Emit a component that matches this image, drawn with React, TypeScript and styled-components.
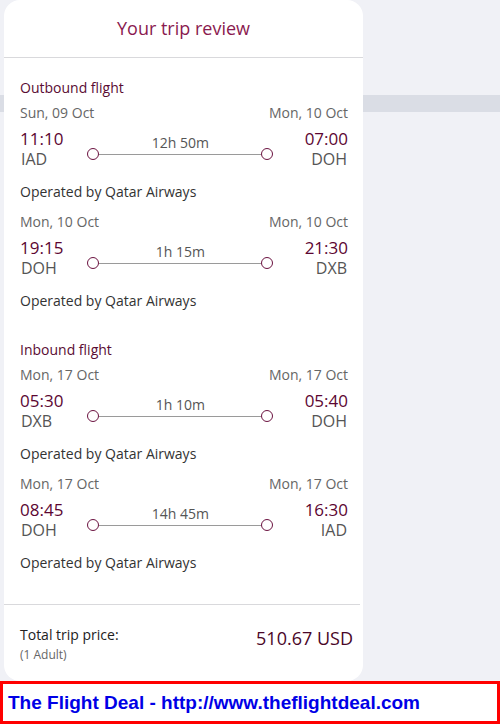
import styled, { createGlobalStyle } from "styled-components";

const GlobalStyle = createGlobalStyle`
  html, body {
    margin: 0;
    padding: 0;
    background: #f0f1f6;
    font-family: "Open Sans", "Noto Sans", sans-serif;
  }
`;

const Page = styled.div`
  position: relative;
  width: 500px;
  height: 724px;
  overflow: hidden;
  background: #f0f1f6;
  display: flex;
  flex-direction: column;
`;

const Band = styled.div`
  position: absolute;
  left: 0;
  right: 0;
  top: 95px;
  height: 17px;
  background: #dadde5;
`;

const Card = styled.div`
  position: relative;
  margin-left: 4px;
  width: 359px;
  height: 681px;
  background: #fff;
  border-radius: 16px;
  display: flex;
  flex-direction: column;
`;

const Title = styled.div`
  height: 57px;
  border-bottom: 1px solid #d9d9dc;
  text-align: center;
  font-size: 18px;
  line-height: 56px;
  color: #8a1a4f;
`;

const Body = styled.div`
  padding: 20px 15px 0 16px;
  flex: 1;
`;

const Section = styled.div<{ $gap?: number }>`
  margin-top: ${({ $gap }) => $gap ?? 0}px;
`;

const SectionTitle = styled.div`
  font-size: 14px;
  line-height: 20px;
  color: #5a0c33;
  margin-bottom: 5px;
`;

const Segment = styled.div<{ $gap?: number }>`
  margin-top: ${({ $gap }) => $gap ?? 0}px;
`;

const DateRow = styled.div`
  display: flex;
  justify-content: space-between;
  font-size: 14px;
  line-height: 20px;
  color: #666;
  margin-bottom: 6px;
`;

const TimeRow = styled.div`
  display: flex;
  align-items: flex-start;
`;

const Point = styled.div<{ $end?: boolean }>`
  display: flex;
  flex-direction: column;
  align-items: ${({ $end }) => ($end ? "flex-end" : "flex-start")};
  margin-left: ${({ $end }) => ($end ? "auto" : "0")};
`;

const Time = styled.div`
  font-size: 17px;
  line-height: 20px;
  color: #5c0632;
`;

const Code = styled.div`
  font-size: 16px;
  line-height: 20px;
  color: #555;
  padding: 0 1px;
`;

const Middle = styled.div`
  width: 186px;
  margin-left: 24px;
  margin-top: 6px;
  display: flex;
  flex-direction: column;
  align-items: center;
`;

const Duration = styled.div`
  font-size: 14px;
  line-height: 16px;
  color: #555;
`;

const Track = styled.div`
  width: 100%;
  height: 12px;
  margin-top: -3px;
  display: flex;
  align-items: center;
`;

const Dot = styled.span`
  display: block;
  box-sizing: border-box;
  width: 12px;
  height: 12px;
  border: 1.5px solid #6b1240;
  border-radius: 50%;
  background: #fff;
  flex: none;
`;

const Line = styled.span`
  flex: 1;
  height: 1px;
  background: #9a9a9a;
`;

const Operated = styled.div`
  margin-top: 13px;
  font-size: 14px;
  line-height: 20px;
  color: #333;
`;

const Total = styled.div`
  border-top: 1px solid #d9d9dc;
  margin-right: 3px;
  height: 77px;
  padding: 20px 7px 0 16px;
  display: flex;
  justify-content: space-between;
  box-sizing: border-box;
`;

const TotalLabel = styled.div`
  font-size: 14px;
  line-height: 20px;
  color: #222;
`;

const Adults = styled.div`
  font-size: 12px;
  line-height: 20px;
  color: #666;
`;

const Price = styled.div`
  font-size: 18px;
  line-height: 24px;
  color: #4a0628;
  margin-top: 1px;
`;

const Footer = styled.div`
  flex: 1;
  border: 3px solid #ff0000;
  background: #fff;
  display: flex;
  align-items: center;
  padding-left: 5px;
  font-family: "Liberation Sans", Arial, sans-serif;
  font-weight: bold;
  font-size: 19px;
  color: #0000e6;
`;

type Seg = {
  fromDate: string;
  toDate: string;
  depart: string;
  arrive: string;
  from: string;
  to: string;
  duration: string;
};

const outbound: Seg[] = [
  { fromDate: "Sun, 09 Oct", toDate: "Mon, 10 Oct", depart: "11:10", arrive: "07:00", from: "IAD", to: "DOH", duration: "12h 50m" },
  { fromDate: "Mon, 10 Oct", toDate: "Mon, 10 Oct", depart: "19:15", arrive: "21:30", from: "DOH", to: "DXB", duration: "1h 15m" },
];

const inbound: Seg[] = [
  { fromDate: "Mon, 17 Oct", toDate: "Mon, 17 Oct", depart: "05:30", arrive: "05:40", from: "DXB", to: "DOH", duration: "1h 10m" },
  { fromDate: "Mon, 17 Oct", toDate: "Mon, 17 Oct", depart: "08:45", arrive: "16:30", from: "DOH", to: "IAD", duration: "14h 45m" },
];

const SegmentView = ({ s, gap }: { s: Seg; gap?: number }) => (
  <Segment $gap={gap}>
    <DateRow>
      <span>{s.fromDate}</span>
      <span>{s.toDate}</span>
    </DateRow>
    <TimeRow>
      <Point>
        <Time>{s.depart}</Time>
        <Code>{s.from}</Code>
      </Point>
      <Middle>
        <Duration>{s.duration}</Duration>
        <Track>
          <Dot />
          <Line />
          <Dot />
        </Track>
      </Middle>
      <Point $end>
        <Time>{s.arrive}</Time>
        <Code>{s.to}</Code>
      </Point>
    </TimeRow>
    <Operated>Operated by Qatar Airways</Operated>
  </Segment>
);

export default function App() {
  return (
    <>
      <GlobalStyle />
      <Page>
        <Band />
        <Card>
          <Title>Your trip review</Title>
          <Body>
            <Section>
              <SectionTitle>Outbound flight</SectionTitle>
              {outbound.map((s, i) => (
                <SegmentView key={i} s={s} gap={i ? 10 : 0} />
              ))}
            </Section>
            <Section $gap={29}>
              <SectionTitle>Inbound flight</SectionTitle>
              {inbound.map((s, i) => (
                <SegmentView key={i} s={s} gap={i ? 10 : 0} />
              ))}
            </Section>
          </Body>
          <Total>
            <div>
              <TotalLabel>Total trip price:</TotalLabel>
              <Adults>(1 Adult)</Adults>
            </div>
            <Price>510.67 USD</Price>
          </Total>
        </Card>
        <Footer>The Flight Deal - http://www.theflightdeal.com</Footer>
      </Page>
    </>
  );
}
